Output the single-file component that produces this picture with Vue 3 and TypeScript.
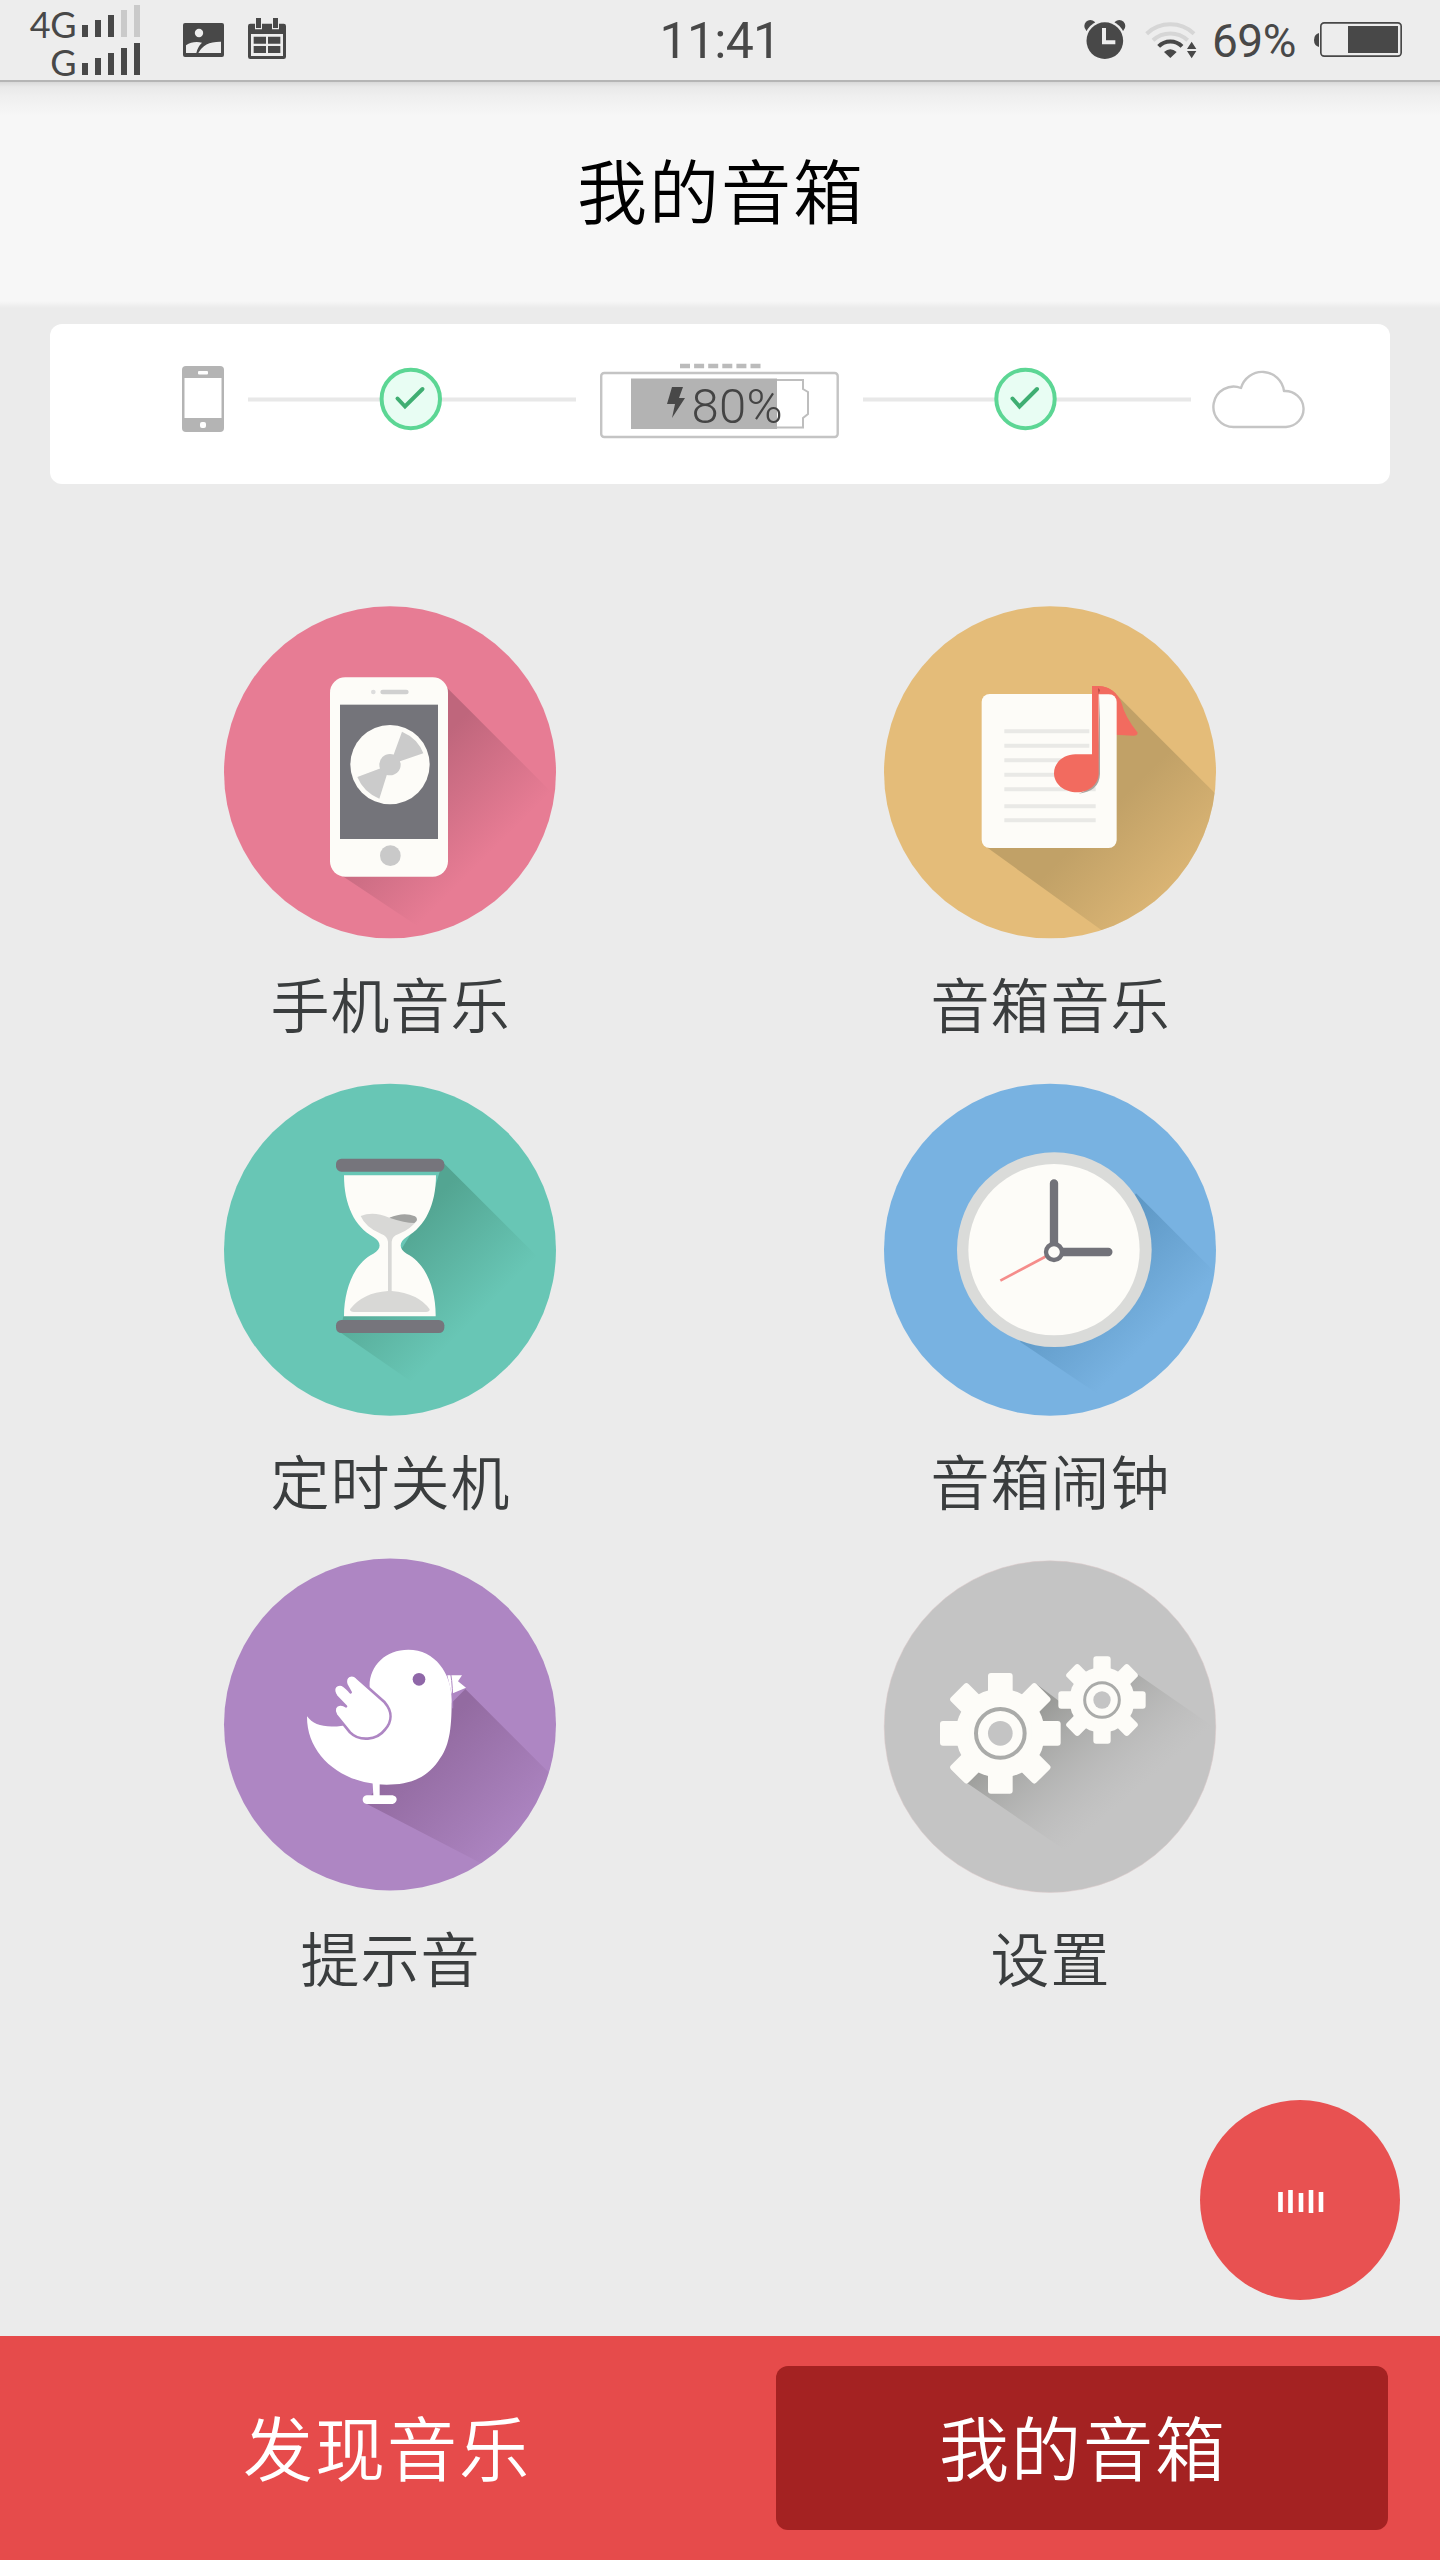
<script setup lang="ts">
interface Tile {
  id: 'phone' | 'sheet' | 'timer' | 'clock' | 'bird' | 'gears'
  label: string
  viewBox: string
}

interface Gear {
  cx: number
  cy: number
  body: number
  tooth: number
  reach: number
  ring: number
  ringWidth: number
  hole: number
}

const tiles: Tile[] = [
  { id: 'phone', label: '手机音乐', viewBox: '42 48 996 996' },
  { id: 'sheet', label: '音箱音乐', viewBox: '42 48 996 996' },
  { id: 'timer', label: '定时关机', viewBox: '42 39 996 996' },
  { id: 'clock', label: '音箱闹钟', viewBox: '42 39 996 996' },
  { id: 'bird', label: '提示音', viewBox: '42 45 996 996' },
  { id: 'gears', label: '设置', viewBox: '42 45 996 996' },
]

const gears: Gear[] = [
  { cx: 391, cy: 565, body: 134, tooth: 37, reach: 181, ring: 73, ringWidth: 12, hole: 37 },
  { cx: 696, cy: 465, body: 98, tooth: 26, reach: 131, ring: 52, ringWidth: 9, hole: 26 },
]

const angles = [0, 45, 90, 135, 180, 225, 270, 315]
const sheetLines = [424, 467, 511, 554, 598, 649, 691]
const bars = [0, 1, 2, 3, 4]
const tabs = [
  { label: '发现音乐', active: false },
  { label: '我的音箱', active: true },
]
</script>

<template>
  <div class="screen">
    <div class="status">
      <div class="networks">
        <div v-for="net in [{ name: '4G', level: 3 }, { name: 'G', level: 5 }]" :key="net.name" class="network">
          <span>{{ net.name }}</span>
          <svg width="58" height="32" viewBox="0 0 58 32">
            <rect
              v-for="b in bars" :key="b" :x="b * 13" :y="20 - b * 5" width="6" :height="12 + b * 5"
              :fill="b < net.level ? '#484848' : '#cacaca'"
            />
          </svg>
        </div>
      </div>
      <svg class="notices" width="104" height="42" viewBox="549 54 312 126">
        <rect x="549" y="69" width="123" height="102" rx="6" fill="#484848" />
        <circle cx="597" cy="99" r="12.500" fill="#ededed" />
        <path d="M558 159V136Q579 122 606 128Q593 140 589 159ZM595 159Q612 124 663 125V159Z" fill="#ededed" />
        <rect x="744" y="71" width="114" height="106" rx="7" fill="#484848" />
        <path d="M765 60h21v28h-21zM816 60h21v28h-21z" fill="#ededed" />
        <path d="M768 54h15v30h-15zM819 54h15v30h-15z" fill="#484848" />
        <path d="M753 102h96v66h-96z" fill="#ededed" />
        <path d="M761 110h37v21h-37zM804 110h37v21h-37zM761 138h37v21h-37zM804 138h37v21h-37z" fill="#484848" />
      </svg>
      <time class="time">11:41</time>
      <div class="indicators">
        <svg class="radio" width="113" height="40" viewBox="131 57 339 120">
          <circle cx="150" cy="78" r="18" fill="#484848" />
          <circle cx="237" cy="78" r="18" fill="#484848" />
          <circle cx="193.500" cy="122" r="62" fill="#ededed" />
          <circle cx="193.500" cy="122" r="55" fill="#484848" />
          <path d="M185 84h12v37h28v12h-40z" fill="#ededed" />
          <g fill="none" stroke-width="12">
            <path d="M319 101A104 104 0 0 1 461 101" stroke="#d6d6d6" />
            <path d="M338 121A76 76 0 0 1 442 121" stroke="#d6d6d6" />
            <path d="M355 139A49 49 0 0 1 425 139" stroke="#484848" />
          </g>
          <path d="M371 156Q390 139 409 156L390 174ZM440 147L454 125L468 147ZM440 153H468L454 175Z" fill="#484848" />
        </svg>
        <span class="percent">69%</span>
        <svg width="88" height="35" viewBox="822 66 264 105">
          <path d="M837 99Q822 103 822 120Q822 137 837 141Z" fill="#484848" />
          <rect x="842.500" y="68.500" width="241" height="100" rx="10" fill="none" stroke="#484848" stroke-width="5" />
          <rect x="924" y="78" width="150" height="81" fill="#484848" />
        </svg>
      </div>
    </div>

    <header class="title">我的音箱</header>

    <section class="link-card">
      <svg width="42" height="76" viewBox="182 363 42 76">
        <rect x="182" y="366" width="42" height="66" rx="4" fill="#b4b4b4" />
        <rect x="184.500" y="378" width="37" height="40" fill="#fff" />
        <rect x="198" y="371" width="10" height="3.500" rx="1" fill="#fff" />
        <rect x="200" y="422" width="6" height="6" rx="2" fill="#fff" />
      </svg>
      <svg class="connector" width="328" height="76" viewBox="0 0 328 76">
        <path d="M0 36.500H328" stroke="#e8e8e8" stroke-width="4" />
        <circle cx="162.800" cy="36" r="29.200" fill="#e8fdf3" stroke="#5cd694" stroke-width="4" />
        <path d="M149.500 35.500L157 43.500L174.500 26" fill="none" stroke="#3fae72" stroke-width="4" stroke-linecap="round" />
      </svg>
      <svg class="device" width="239" height="76" viewBox="600 363 239 76">
        <path d="M680 366H761" stroke="#bbb" stroke-width="4.500" stroke-dasharray="10 4.100" />
        <rect x="601.200" y="373" width="236.500" height="64" rx="3" fill="none" stroke="#c4c4c4" stroke-width="2.400" />
        <path d="M777 380H803V389L808 392V414L803 418V427.500H777" fill="none" stroke="#bebebe" stroke-width="2" />
        <rect x="631" y="378.500" width="146" height="50.500" fill="#b3b3b3" />
        <path d="M672 387H683L679 398H685L672 418L675 404H667Z" fill="#484848" />
        <text x="691.500" y="422.500" class="battery-text">80%</text>
      </svg>
      <svg class="connector" width="328" height="76" viewBox="0 0 328 76">
        <path d="M0 36.500H328" stroke="#e8e8e8" stroke-width="4" />
        <circle cx="162.500" cy="36" r="29.200" fill="#e8fdf3" stroke="#5cd694" stroke-width="4" />
        <path d="M149.500 35.500L156.500 43.500L174 26" fill="none" stroke="#3fae72" stroke-width="4" stroke-linecap="round" />
      </svg>
      <svg class="cloud" width="94" height="76" viewBox="1212 363 94 76">
        <path
          d="M1234 427A20.200 20.200 0 1 1 1241 388A22 22 0 0 1 1284 391A18.500 18 0 0 1 1286 427Z"
          fill="none" stroke="#c5c5c5" stroke-width="2.400" stroke-linejoin="round"
        />
      </svg>
    </section>

    <main class="grid">
      <div v-for="tile in tiles" :key="tile.id" class="tile">
        <svg v-if="tile.id === 'phone'" class="icon" :viewBox="tile.viewBox">
          <defs>
            <linearGradient id="g1" gradientUnits="userSpaceOnUse" x1="570" y1="570" x2="815" y2="815">
              <stop offset="0" stop-color="#bf667c" /><stop offset="1" stop-color="#bf667c" stop-opacity="0" />
            </linearGradient>
            <clipPath id="c1"><circle cx="540" cy="547" r="498" /></clipPath>
          </defs>
          <circle cx="540" cy="547" r="498" fill="#e77c94" />
          <path d="M700 282L1070 652L700 1060L385 850Z" fill="url(#g1)" clip-path="url(#c1)" />
          <rect x="360" y="262" width="354" height="598" rx="46" fill="#fdfcf8" />
          <rect x="390" y="344" width="294" height="403" fill="#74747a" />
          <circle cx="490" cy="306" r="7" fill="#ddd" />
          <rect x="511" y="299" width="85" height="14" rx="7" fill="#d0d0d0" />
          <circle cx="541" cy="797" r="31" fill="#c9c9c9" />
          <circle cx="540" cy="524" r="119" fill="#fdfcf8" />
          <path d="M540 524L576 425Q624 446 640 490ZM540 524L442 561Q461 607 508 626Z" fill="#cbcbcb" />
          <circle cx="540" cy="524" r="32" fill="#cbcbcb" />
        </svg>

        <svg v-else-if="tile.id === 'sheet'" class="icon" :viewBox="tile.viewBox">
          <defs>
            <linearGradient id="g2" gradientUnits="userSpaceOnUse" x1="690" y1="690" x2="985" y2="985">
              <stop offset="0" stop-color="#c1a167" /><stop offset="1" stop-color="#c1a167" stop-opacity="0" />
            </linearGradient>
            <clipPath id="c2"><circle cx="540" cy="547" r="498" /></clipPath>
          </defs>
          <circle cx="540" cy="547" r="498" fill="#e4bc79" />
          <path d="M735 310L1080 655L860 1140L345 768Z" fill="url(#g2)" clip-path="url(#c2)" />
          <path d="M684 288Q738 292 755 340Q764 380 803 428Q803 437 790 437L735 434V340Q728 312 684 312Z" fill="#f26b5f" />
          <rect x="335" y="312" width="405" height="462" rx="24" fill="#fdfcf8" />
          <path
            v-for="(y, i) in sheetLines" :key="y" :d="`M403 ${y}H${i < 2 ? 658 : 677}`" stroke="#e9e9e6"
            stroke-width="12"
          />
          <path d="M684 288Q718 288 738 313H684Z" fill="#f26b5f" />
          <path d="M690 312V552Q688 604 626 611Q660 600 680 570Z" fill="#a9a5a0" />
          <path d="M666 288H686V550C686 585 655 607 622 607C583 607 552 583 552 550C552 515 584 493 616 493H666Z" fill="#f26b5f" />
          <path d="M684 294L690 300L686 312Z" fill="#b44a43" />
        </svg>

        <svg v-else-if="tile.id === 'timer'" class="icon" :viewBox="tile.viewBox">
          <defs>
            <linearGradient id="g3" gradientUnits="userSpaceOnUse" x1="530" y1="530" x2="770" y2="770">
              <stop offset="0" stop-color="#53a592" /><stop offset="1" stop-color="#53a592" stop-opacity="0" />
            </linearGradient>
          </defs>
          <circle cx="540" cy="539" r="498" fill="#68c6b5" />
          <path d="M698 276L1010 588L640 960L388 785L400 740L560 560L660 400Z" fill="url(#g3)" />
          <rect x="378" y="266" width="325" height="39" rx="16" fill="#76757c" />
          <rect x="378" y="750" width="325" height="39" rx="16" fill="#76757c" />
          <path
            d="M402 316H678C678 405 645 470 590 501C566 516 566 538 590 551C646 578 678 655 677 739H402C402 655 434 578 490 551C515 538 515 516 490 501C434 470 402 405 402 316Z"
            fill="#fdfcf8"
          />
          <path d="M452 438Q490 422 538 443L622 450Q602 478 566 492Q546 499 545 515V663Q625 670 659 718Q659 726 648 726H432Q420 726 420 718Q458 668 534 663V515Q532 499 514 492Q467 473 452 438Z" fill="#d8d8d6" />
          <path d="M538 443Q582 424 615 439Q628 448 613 459Q585 459 538 443Z" fill="#a2a3a1" />
        </svg>

        <svg v-else-if="tile.id === 'clock'" class="icon" :viewBox="tile.viewBox">
          <defs>
            <linearGradient id="g4" gradientUnits="userSpaceOnUse" x1="590" y1="590" x2="825" y2="825">
              <stop offset="0" stop-color="#5d97c4" /><stop offset="1" stop-color="#5d97c4" stop-opacity="0" />
            </linearGradient>
            <clipPath id="c4"><circle cx="540" cy="539" r="498" /></clipPath>
          </defs>
          <circle cx="540" cy="539" r="498" fill="#78b2e1" />
          <path d="M798 370L1060 632L740 1010L450 815Z" fill="url(#g4)" clip-path="url(#c4)" />
          <circle cx="553" cy="539" r="292" fill="#dadbd9" />
          <circle cx="552" cy="539" r="257" fill="#fdfcf8" />
          <path d="M530 558L391 632" stroke="#f58d8b" stroke-width="8" />
          <path d="M552 530V340M565 546H715" stroke="#727279" stroke-width="25" stroke-linecap="round" />
          <circle cx="552" cy="546" r="24" fill="#fdfcf8" stroke="#727279" stroke-width="13" />
        </svg>

        <svg v-else-if="tile.id === 'bird'" class="icon" :viewBox="tile.viewBox">
          <defs>
            <linearGradient id="g5" gradientUnits="userSpaceOnUse" x1="620" y1="620" x2="920" y2="920">
              <stop offset="0" stop-color="#936ba1" /><stop offset="1" stop-color="#936ba1" stop-opacity="0" />
            </linearGradient>
            <clipPath id="c5"><circle cx="540" cy="538.500" r="498" /></clipPath>
          </defs>
          <circle cx="540" cy="538.500" r="498" fill="#ae86c3" />
          <path d="M766 432L1080 746L900 1000L465 774L600 600Z" fill="url(#g5)" clip-path="url(#c5)" />
          <path d="M712 391H756L744 409L768 428L725 446Z" fill="#fff" />
          <path
            d="M479 430C475 365 525 314 595 314C675 314 725 385 725 465C725 560 717 606 685 648C645 705 590 719 530 719C395 718 290 630 291 514C310 540 345 550 398 542Z"
            fill="#fff"
          />
          <path d="M722 385Q729 425 728 490" fill="none" stroke="#ae86c3" stroke-width="3" />
          <path
            d="M441 398L524 472C548 500 546 530 525 554C500 587 448 590 420 562L378 510C368 494 376 479 390 478Q401 477 408 484L379 454C365 434 374 418 390 418C403 418 411 430 422 442L409 419C401 392 427 383 441 398Z"
            fill="#fff" stroke="#ae86c3" stroke-width="8" stroke-linejoin="round"
          />
          <path d="M487 700H509V751H548Q560 754 560 763Q560 773 548 777H470Q458 774 458 764Q458 753 470 751H490Z" fill="#fff" />
          <circle cx="627" cy="403" r="19" fill="#8f67a8" />
        </svg>

        <svg v-else class="icon" :viewBox="tile.viewBox">
          <defs>
            <linearGradient id="g6" gradientUnits="userSpaceOnUse" x1="490" y1="500" x2="735" y2="790">
              <stop offset="0" stop-color="#989996" /><stop offset="1" stop-color="#b4b4b4" stop-opacity="0" />
            </linearGradient>
          </defs>
          <circle cx="540" cy="545" r="497.500" fill="#c4c4c4" stroke="#dcc9c9" stroke-width="1.500" />
          <path d="M292 715L500 418L580 478L798 385L1030 545L650 960Z" fill="url(#g6)" />
          <g v-for="gear in gears" :key="gear.cx" :transform="`translate(${gear.cx} ${gear.cy})`">
            <circle :r="gear.body" fill="#fdfcf8" />
            <rect
              v-for="a in angles" :key="a" :x="-gear.tooth" :y="-gear.reach" :width="gear.tooth * 2"
              :height="gear.reach - gear.ring - 20" rx="9" fill="#fdfcf8" :transform="`rotate(${a})`"
            />
            <circle :r="gear.ring" fill="none" stroke="#aaaba9" :stroke-width="gear.ringWidth" />
            <circle :r="gear.hole" fill="#c4c4c4" />
          </g>
        </svg>
        <span class="label">{{ tile.label }}</span>
      </div>
    </main>

    <nav class="tabs">
      <div v-for="tab in tabs" :key="tab.label" class="tab" :class="{ active: tab.active }">{{ tab.label }}</div>
    </nav>

    <button class="fab" type="button">
      <svg width="48" height="24" viewBox="0 0 48 24">
        <path d="M2.500 2V22M12.500 0V23M23 3V22M33 0V23M43 2V22" stroke="#fff" stroke-width="4.600" />
      </svg>
    </button>
  </div>
</template>

<style>
body {
  margin: 0;
}
</style>

<style scoped>
.screen {
  position: relative;
  display: flex;
  flex-direction: column;
  width: 1440px;
  height: 2560px;
  overflow: hidden;
  background: #ebebeb;
  font-family: "Noto Sans CJK SC", sans-serif;
  font-weight: 350;
}

svg {
  display: block;
  flex: none;
}

.status {
  display: grid;
  grid-template-columns: 183px 467px 140px 650px;
  height: 80px;
  border-bottom: 2px solid #b5b5b5;
  background: #ededed;
  color: #484848;
}

.networks {
  display: flex;
  flex-direction: column;
  width: 140px;
  height: 75px;
  padding-top: 5px;
}

.network {
  display: flex;
  justify-content: flex-end;
  gap: 6px;
  height: 40px;
  font: 400 36px/38px Lato, sans-serif;
  letter-spacing: -0.5px;
}

.notices {
  margin-top: 18px;
}

.time {
  font: 400 50px/82px Roboto, sans-serif;
  letter-spacing: -0.7px;
  text-align: center;
  white-space: nowrap;
}

.indicators {
  display: flex;
  justify-content: flex-end;
  align-items: flex-start;
  padding-right: 38px;
}

.radio {
  margin-top: 19px;
}

.percent {
  width: 86px;
  margin: 0 16px 0 15px;
  font: 400 46px/82px Roboto, sans-serif;
  letter-spacing: -0.5px;
  white-space: nowrap;
}

.indicators svg:last-child {
  margin-top: 22px;
}

.title {
  height: 226px;
  background: linear-gradient(#d9d9d9 0, #e9e9e9 5px, #efefef 14px, #f7f7f7 34px, #f7f7f7 219px, #ebebeb 226px);
  color: #000;
  font-size: 70px;
  line-height: 213px;
  letter-spacing: 2px;
  text-indent: 2px;
  text-align: center;
}

.link-card {
  display: flex;
  align-items: flex-start;
  box-sizing: border-box;
  width: 1340px;
  height: 160px;
  margin: 16px auto 0;
  padding: 39px 0 0 132px;
  border-radius: 12px;
  background: #fff;
}

.connector {
  margin: 0 24px;
}

.cloud {
  margin-left: -3px;
}

.battery-text {
  font: 300 49px Roboto, sans-serif;
  letter-spacing: 0.3px;
  fill: #444;
}

.grid {
  display: grid;
  grid-template-columns: 660px 660px;
  grid-auto-rows: 477px;
  justify-content: center;
  margin-top: 122px;
}

.tile {
  display: flex;
  flex-direction: column;
  align-items: center;
}

.icon {
  width: 332px;
  height: 332px;
  overflow: visible;
}

.label {
  margin-top: 20px;
  color: #3a3d3e;
  font-size: 59px;
  line-height: 90px;
  letter-spacing: 1px;
  text-indent: 1px;
}

.tabs {
  display: flex;
  box-sizing: border-box;
  height: 224px;
  margin-top: auto;
  padding: 30px 52px 30px 80px;
  gap: 84px;
  background: #e64b4b;
  color: #fff;
  font-size: 70px;
  line-height: 159px;
  letter-spacing: 2px;
  text-indent: 2px;
  text-align: center;
}

.tab {
  width: 612px;
  border-radius: 12px;
}

.active {
  background: #a42222;
}

.fab {
  position: absolute;
  top: 2100px;
  left: 1200px;
  display: flex;
  align-items: center;
  justify-content: center;
  width: 200px;
  height: 200px;
  padding: 3px 0 0 3px;
  border: 0;
  border-radius: 50%;
  background: #e85151;
}
</style>
